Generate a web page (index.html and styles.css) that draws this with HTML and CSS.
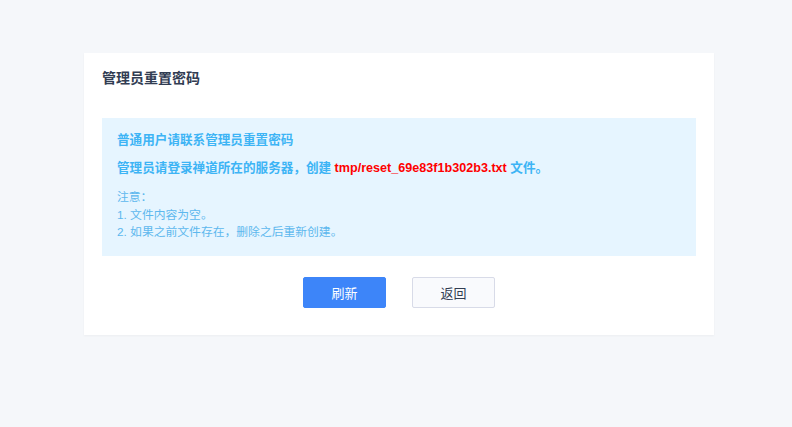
FILE: index.html
```html
<!DOCTYPE html>
<html>
<head lang="zh-CN">
    <meta charset="UTF-8">
    <title>管理员重置密码</title>
    <link rel="stylesheet" href="styles.css">
</head>
<body>
<div class="page">
    <div class="panel">
        <div class="panel-title">管理员重置密码</div>
        <div class="alert">
            <p class="alert-line">普通用户请联系管理员重置密码</p>
            <p class="alert-line">管理员请登录禅道所在的服务器，创建 <span class="file">tmp/reset_69e83f1b302b3.txt</span> 文件。</p>
            <div class="notes">
                <div>注意：</div>
                <div>1. 文件内容为空。</div>
                <div>2. 如果之前文件存在，删除之后重新创建。</div>
            </div>
        </div>
        <div class="actions">
            <button class="btn btn-primary">刷新</button>
            <button class="btn">返回</button>
        </div>
    </div>
</div>
</body>
</html>
```

FILE: styles.css
```css
html,body{
    margin: 0;
    padding: 0;
    height: 100%;
}
body{
    background: #f5f7fa;
    font-family: "Liberation Sans", "Noto Sans CJK SC", sans-serif;
    font-size: 13px;
    color: #313c52;
}
.page{
    padding-top: 53px;
    display: flex;
    justify-content: center;
}
.panel{
    width: 594px;
    margin-left: 6px;
    background: #fff;
    padding: 15px 18px 27px;
    box-shadow: 0 1px 2px rgba(0,0,0,.04);
}
.panel-title{
    font-weight: bold;
    font-size: 14px;
    line-height: 21px;
    color: #313c52;
}
.alert{
    margin-top: 29px;
    background: #e6f5ff;
    padding: 12px 15px 14px;
    color: #3db4f5;
}
.alert-line{
    margin: 0;
    font-weight: bold;
    font-size: 12.6px;
    line-height: 20px;
}
.alert-line + .alert-line{
    margin-top: 8px;
}
.file{
    color: #ff0000;
}
.notes{
    margin-top: 11px;
    font-size: 11.8px;
    line-height: 17.5px;
    color: #5db8ee;
}
.actions{
    margin-top: 21px;
    display: flex;
    justify-content: center;
    gap: 26px;
}
.btn{
    width: 83px;
    height: 31px;
    border: 1px solid #d8dbe8;
    border-radius: 2px;
    background: #f9fafd;
    font-family: inherit;
    font-size: 13px;
    color: #313c52;
    cursor: pointer;
}
.btn-primary{
    background: #3d85f9;
    border-color: #3d85f9;
    color: #fff;
}
```
